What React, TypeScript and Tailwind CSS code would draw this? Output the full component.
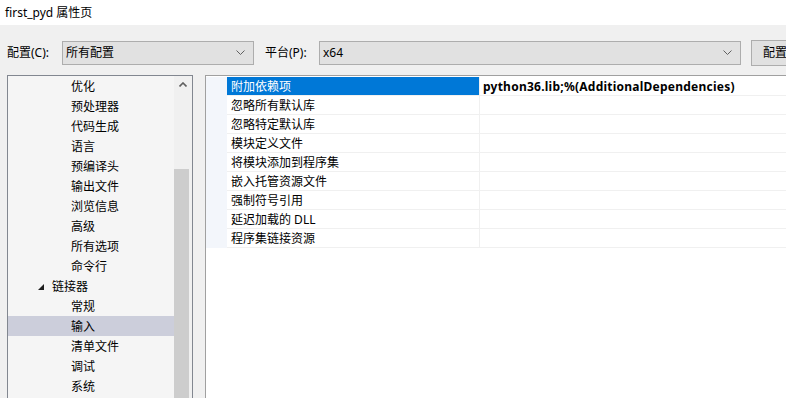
const FONT = "font-['Segoe_UI','Noto_Sans','Noto_Sans_CJK_SC',sans-serif]";

type TreeItem = { label: string; level: number; expanded?: boolean; selected?: boolean };

const treeItems: TreeItem[] = [
  { label: "优化", level: 2 },
  { label: "预处理器", level: 2 },
  { label: "代码生成", level: 2 },
  { label: "语言", level: 2 },
  { label: "预编译头", level: 2 },
  { label: "输出文件", level: 2 },
  { label: "浏览信息", level: 2 },
  { label: "高级", level: 2 },
  { label: "所有选项", level: 2 },
  { label: "命令行", level: 2 },
  { label: "链接器", level: 1, expanded: true },
  { label: "常规", level: 2 },
  { label: "输入", level: 2, selected: true },
  { label: "清单文件", level: 2 },
  { label: "调试", level: 2 },
  { label: "系统", level: 2 },
];

const props = [
  { name: "附加依赖项", value: "python36.lib;%(AdditionalDependencies)" },
  { name: "忽略所有默认库", value: "" },
  { name: "忽略特定默认库", value: "" },
  { name: "模块定义文件", value: "" },
  { name: "将模块添加到程序集", value: "" },
  { name: "嵌入托管资源文件", value: "" },
  { name: "强制符号引用", value: "" },
  { name: "延迟加载的 DLL", value: "" },
  { name: "程序集链接资源", value: "" },
];

function Chevron() {
  return (
    <svg width="9" height="6" viewBox="0 0 9 6" className="shrink-0">
      <polyline points="0.5,0.5 4.5,4.5 8.5,0.5" fill="none" stroke="#606060" strokeWidth="1" />
    </svg>
  );
}

export default function App() {
  return (
    <div className={`w-[786px] h-[398px] overflow-hidden bg-[#f0f0f0] text-[12px] text-black ${FONT}`}>
      {/* Title */}
      <div className="h-[25px] bg-white flex items-center pl-[5px] text-[12px]">first_pyd 属性页</div>

      {/* Config row */}
      <div className="flex items-center h-[26px] mt-[15px] pl-[7px] whitespace-nowrap">
        <span className="w-[55px] shrink-0">配置(C):</span>
        <div className="w-[192px] h-[24px] shrink-0 border border-[#adadad] bg-[#e1e1e1] flex items-center pl-[3px] pr-[8px] justify-between">
          <span>所有配置</span>
          <Chevron />
        </div>
        <span className="ml-[11px] w-[54px] shrink-0">平台(P):</span>
        <div className="w-[422px] h-[24px] shrink-0 border border-[#adadad] bg-[#e1e1e1] flex items-center pl-[3px] pr-[8px] justify-between">
          <span>x64</span>
          <Chevron />
        </div>
        <div className="ml-[10px] w-[100px] h-[26px] border border-[#adadad] bg-[#e1e1e1] flex items-center pl-[11px] shrink-0">
          配置管理器(O)...
        </div>
      </div>

      {/* Panels */}
      <div className="flex mt-[9px] pl-[7px] h-[400px]">
        {/* Tree */}
        <div className="w-[186px] border border-[#828790] bg-[#f5f5f5] flex shrink-0">
          <div className="w-[166px] flex flex-col">
            {treeItems.map((t, i) => (
              <div
                key={i}
                className={`h-[20px] flex items-center shrink-0 pt-[1px] ${t.selected ? "bg-[#cccedb]" : ""}`}
              >
                {t.level === 1 ? (
                  <div className="flex items-center pl-[30px]">
                    <svg width="6" height="6" viewBox="0 0 6 6" className="mr-[8px]">
                      <polygon points="6,0 6,6 0,6" fill="#1e1e1e" />
                    </svg>
                    <span>{t.label}</span>
                  </div>
                ) : (
                  <span className="pl-[63px]">{t.label}</span>
                )}
              </div>
            ))}
          </div>
          <div className="w-[18px] bg-[#f0f0f0] flex flex-col">
            <div className="h-[17px] flex items-center justify-center pr-[1px]">
              <svg width="8" height="5" viewBox="0 0 8 5">
                <polyline points="0.5,4.5 4,1 7.5,4.5" fill="none" stroke="#606060" strokeWidth="1.6" />
              </svg>
            </div>
            <div className="h-[76px]" />
            <div className="w-[15px] flex-1 bg-[#cdcdcd]" />
          </div>
        </div>

        {/* Property grid */}
        <div className="ml-[12px] flex-1 border-l border-t border-[#a0a0a0] bg-white">
          <div className="flex pt-[1px]">
            <div className="w-[21px] bg-[#f3f6fb] shrink-0" />
            <div className="flex-1 flex flex-col">
              {props.map((p, i) => (
                <div key={i} className="flex h-[19px] border-b border-[#f0f0f0]">
                  <div
                    className={`w-[253px] flex items-center pl-[4px] pt-[1px] border-r border-[#f0f0f0] ${
                      i === 0 ? "bg-[#0078d7] text-white" : ""
                    }`}
                  >
                    {p.name}
                  </div>
                  <div className="flex-1 flex items-center pl-[3px] pt-[1px] font-bold tracking-[0.24px] whitespace-nowrap">
                    {p.value}
                  </div>
                </div>
              ))}
            </div>
          </div>
        </div>
      </div>
    </div>
  );
}
